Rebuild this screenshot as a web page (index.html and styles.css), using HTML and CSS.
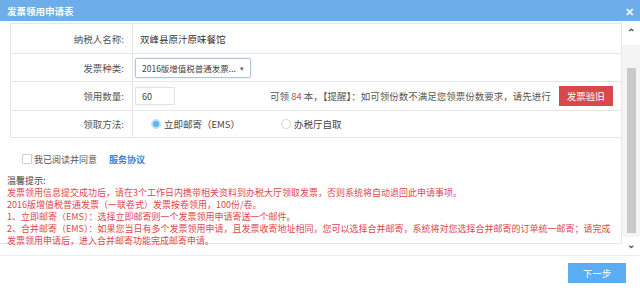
FILE: index.html
```html
<!DOCTYPE html>
<html lang="zh-CN">
<head>
  <meta charset="UTF-8">
  <title>发票领用申请表</title>
  <link rel="stylesheet" href="styles.css">
</head>
<body>
  <div class="dialog">
    <div class="titlebar">
      <span class="title">发票领用申请表</span>
      <span class="close">&#x2715;</span>
    </div>

    <div class="main">
      <div class="content">
        <div class="form">
          <div class="row row-1">
            <div class="label">纳税人名称:</div>
            <div class="value">双峰县原汁原味餐馆</div>
          </div>
          <div class="row row-2">
            <div class="label">发票种类:</div>
            <div class="value">
              <div class="select">
                <span>2016版增值税普通发票...</span>
                <span class="caret">&#9662;</span>
              </div>
            </div>
          </div>
          <div class="row row-3">
            <div class="label">领用数量:</div>
            <div class="value">
              <div class="input">60</div>
              <span class="hint">可领 <em>84</em> 本，【提醒】：如可领份数不满足您领票份数要求，请先进行</span>
              <button class="btn-red">发票验旧</button>
            </div>
          </div>
          <div class="row row-4">
            <div class="label">领取方法:</div>
            <div class="value">
              <label class="radio checked"><i></i>立即邮寄（EMS）</label>
              <label class="radio"><i></i>办税厅自取</label>
            </div>
          </div>
        </div>

        <div class="agree">
          <span class="checkbox"></span>
          <span>我已阅读并同意</span>
          <a class="link">服务协议</a>
        </div>

        <div class="notice">
          <div class="notice-title">温馨提示:</div>
          <p>发票领用信息提交成功后，请在3个工作日内携带相关资料到办税大厅领取发票，否则系统将自动退回此申请事项。</p>
          <p>2016版增值税普通发票（一联卷式）发票按卷领用，100份/卷。</p>
          <p>1、立即邮寄（EMS）：选择立即邮寄则一个发票领用申请寄送一个邮件。</p>
          <p>2、合并邮寄（EMS）：如果您当日有多个发票领用申请，且发票收寄地址相同，您可以选择合并邮寄，系统将对您选择合并邮寄的订单统一邮寄；请完成<br>发票领用申请后，进入合并邮寄功能完成邮寄申请。</p>
        </div>
      </div>

      <div class="scrollbar">
        <span class="arrow">&#x2303;</span>
        <div class="track"><div class="thumb"></div></div>
        <span class="arrow down">&#x2304;</span>
      </div>
    </div>

    <div class="footer">
      <button class="btn-next">下一步</button>
    </div>
  </div>
</body>
</html>
```

FILE: styles.css
```css
:root {
  --blue: #6daeea;
  --border: #e6e6e6;
  --red: #e0464b;
  --text: #444;
}

* {
  margin: 0;
  padding: 0;
  box-sizing: border-box;
  font-family: "Noto Sans CJK SC", "Noto Sans", sans-serif;
}

body {
  width: 640px;
  height: 290px;
  overflow: hidden;
  background-color: #fff;
  color: var(--text);
  font-size: 9px;
}

.dialog {
  display: flex;
  flex-direction: column;
  height: 290px;
}

.titlebar {
  height: 21px;
  background-color: var(--blue);
  display: flex;
  align-items: center;
  justify-content: space-between;
  padding: 0 6px 0 7px;
  color: #fff;
}

.title {
  font-size: 9.5px;
  font-weight: 700;
}

.close {
  font-size: 11px;
  font-weight: 700;
  color: #f2f8ff;
}

.main {
  display: flex;
  height: 234px;
}

.content {
  width: 622px;
  height: 223px;
  border-right: 1px solid var(--border);
  border-bottom: 1px solid var(--border);
  padding-top: 2px;
}

/* form table */
.form {
  margin-left: 10px;
  border: 1px solid var(--border);
  border-right: none;
  font-size: 9.5px;
}

.row {
  display: flex;
  border-top: 1px solid var(--border);
}

.row:first-child {
  border-top: none;
}

.row-1 { height: 29px; }
.row-2 { height: 28px; }
.row-3 { height: 29px; }
.row-4 { height: 27px; }

.label {
  width: 122px;
  border-right: 1px solid var(--border);
  text-align: right;
  padding-right: 8px;
  display: flex;
  align-items: center;
  justify-content: flex-end;
  color: #555;
}

.value {
  flex: 1;
  display: flex;
  align-items: center;
  padding-left: 7px;
  color: #333;
}

.row-2 .value,
.row-3 .value {
  padding-left: 2px;
}

.select {
  width: 116px;
  height: 20px;
  border: 1px solid #b4c6dc;
  border-radius: 2px;
  box-shadow: 0 0 2px rgba(120, 160, 210, 0.4);
  display: flex;
  align-items: center;
  justify-content: space-between;
  padding: 0 6px 0 6px;
  font-size: 8.5px;
  color: #444;
}

.caret {
  font-size: 7px;
  color: #666;
}

.input {
  width: 40px;
  height: 18px;
  border: 1px solid #e2e2e2;
  display: flex;
  align-items: center;
  padding-left: 6px;
  color: #444;
  font-size: 9px;
}

.hint {
  margin-left: 95px;
  color: #555;
}

.hint em {
  font-style: normal;
  color: var(--red);
}

.btn-red {
  margin-left: 8px;
  width: 54px;
  height: 20px;
  border: none;
  background-color: #d9494a;
  color: #fff;
  font-size: 9.5px;
}

.radio {
  display: flex;
  align-items: center;
  margin-left: 11px;
  color: #444;
}

.radio + .radio {
  margin-left: 41px;
}

.radio i {
  width: 10px;
  height: 10px;
  border-radius: 50%;
  border: 1px solid #d4d4d4;
  margin-right: 3px;
}

.radio.checked i {
  border-color: #cfe7f8;
  background-color: #5fb4ea;
  box-shadow: inset 0 0 0 1px #bfe0f7;
}

/* agreement */
.agree {
  display: flex;
  align-items: center;
  margin: 15px 0 0 22px;
  height: 12px;
  color: #555;
}

.checkbox {
  width: 10px;
  height: 10px;
  border: 1px solid #cfcfcf;
  border-radius: 1px;
  margin-right: 2px;
}

.link {
  margin-left: 12px;
  color: #3f7fd6;
  font-weight: 700;
}

/* notice */
.notice {
  margin-top: 10px;
  padding: 0 0 0 7px;
  line-height: 12px;
}

.notice-title {
  color: #444;
}

.notice p {
  color: var(--red);
}

/* fake scrollbar */
.scrollbar {
  width: 18px;
  display: flex;
  flex-direction: column;
  align-items: center;
  padding-top: 6px;
}

.arrow {
  height: 10px;
  font-size: 10px;
  line-height: 10px;
  color: #555;
  font-weight: 700;
}

.track {
  flex: 1;
  width: 100%;
  display: flex;
  justify-content: center;
  padding: 23px 0 4px;
  background-color: #f4f4f4;
  margin: 8px 0 2px;
}

.thumb {
  width: 9px;
  background-color: #c9c9c9;
}

.arrow.down {
  margin-bottom: 6px;
}

/* footer */
.footer {
  flex: 1;
  border-top: 1px solid #ececec;
  display: flex;
  justify-content: flex-end;
  align-items: flex-start;
  padding: 7px 14px 0 0;
}

.btn-next {
  width: 58px;
  height: 20px;
  border: none;
  background-color: #5aadf2;
  color: #fff;
  font-size: 9.5px;
}
```
